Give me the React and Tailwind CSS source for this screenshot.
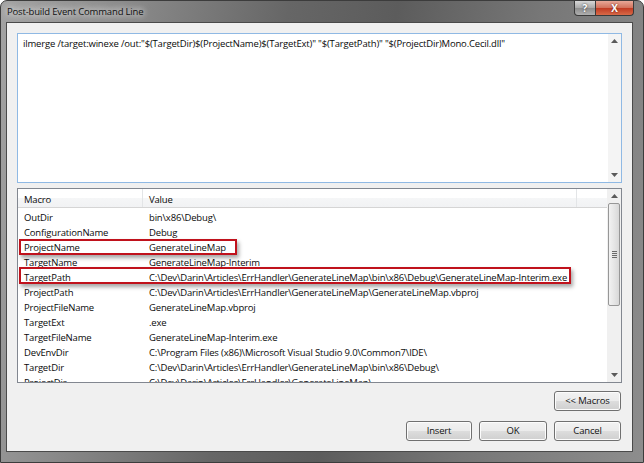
import React from 'react';

const rows = [
  ['OutDir', 'bin\\x86\\Debug\\'],
  ['ConfigurationName', 'Debug'],
  ['ProjectName', 'GenerateLineMap'],
  ['TargetName', 'GenerateLineMap-Interim'],
  ['TargetPath', 'C:\\Dev\\Darin\\Articles\\ErrHandler\\GenerateLineMap\\bin\\x86\\Debug\\GenerateLineMap-Interim.exe'],
  ['ProjectPath', 'C:\\Dev\\Darin\\Articles\\ErrHandler\\GenerateLineMap\\GenerateLineMap.vbproj'],
  ['ProjectFileName', 'GenerateLineMap.vbproj'],
  ['TargetExt', '.exe'],
  ['TargetFileName', 'GenerateLineMap-Interim.exe'],
  ['DevEnvDir', 'C:\\Program Files (x86)\\Microsoft Visual Studio 9.0\\Common7\\IDE\\'],
  ['TargetDir', 'C:\\Dev\\Darin\\Articles\\ErrHandler\\GenerateLineMap\\bin\\x86\\Debug\\'],
  ['ProjectDir', 'C:\\Dev\\Darin\\Articles\\ErrHandler\\GenerateLineMap\\'],
];

function Arrow({ up }) {
  return (
    <svg width="7" height="4" viewBox="0 0 7 4">
      {up ? <path d="M0 4 L3.5 0 L7 4 Z" fill="#5a5a5a" /> : <path d="M0 0 L3.5 4 L7 0 Z" fill="#5a5a5a" />}
    </svg>
  );
}

function Button({ children, w }) {
  return (
    <button className={`${w} h-[20px] rounded-[3px] border border-[#707070] bg-[linear-gradient(#f2f2f2_0%,#ebebeb_50%,#dddddd_51%,#cfcfcf_100%)] shadow-[inset_0_0_0_1px_#fcfcfc] text-[9.5px] tracking-[-0.17px] text-[#111] flex items-center justify-center`}>
      {children}
    </button>
  );
}

export default function App() {
  return (
    <div className="w-[644px] h-[463px] flex flex-col overflow-hidden rounded-t-[7px] border border-[#3c3c3c] bg-[linear-gradient(100deg,#a3a3a3_0%,#8a8a8a_18%,#666666_40%,#5c5c5c_55%,#777777_75%,#8d8d8d_100%)] font-['Open_Sans',sans-serif]">
      {/* Title bar */}
      <div className="h-[21px] flex items-start">
        <div className="pl-[6px] pt-[4px] text-[9.5px] tracking-[-0.17px] text-[#111] [text-shadow:0_0_6px_#ffffff,0_0_10px_rgba(255,255,255,0.8)]">
          Post-build Event Command Line
        </div>
        <div className="ml-auto mr-[9px] flex">
          <div className="w-[22px] h-[15px] rounded-bl-[4px] border border-t-0 border-[#3a3a3a] bg-[linear-gradient(#d8d8d8,#a8a8a8_50%,#8c8c8c_51%,#b0b0b0)] flex items-center justify-center text-[10px] font-bold text-white [text-shadow:0_0_2px_#222]">
            ?
          </div>
          <div className="w-[38px] h-[15px] rounded-br-[4px] border border-t-0 border-l-0 border-[#3a3a3a] bg-[linear-gradient(#e8a898,#d0705a_50%,#c03a22_51%,#d86a48)] flex items-center justify-center text-[10px] font-bold text-white [text-shadow:0_0_2px_#5a1a10]">
            X
          </div>
        </div>
      </div>

      {/* Body with frame */}
      <div className="flex-1 flex pl-[5px] pr-[10px] pb-[10px]">
        <div className="flex-1 flex flex-col border border-[#4a4a4a] bg-[#f0f0f0] px-[10px] pt-[10px] text-[9.5px] tracking-[-0.17px] text-[#0a0a0a]">
          {/* Command text box */}
          <div className="h-[150px] flex border border-[#8fb9e4] bg-white">
            <div className="flex-1 pl-[5px] pt-[3px] whitespace-nowrap">
              ilmerge /target:winexe /out:"$(TargetDir)$(ProjectName)$(TargetExt)" "$(TargetPath)" "$(ProjectDir)Mono.Cecil.dll"
            </div>
            <div className="w-[13px] bg-[#f4f4f4] flex flex-col items-center justify-between py-[5px]">
              <Arrow up />
              <Arrow />
            </div>
          </div>

          {/* Macro list */}
          <div className="relative mt-[5px] h-[195px] flex border border-[#828790] bg-white overflow-hidden">
            <div className="flex-1 flex flex-col min-w-0">
              <div className="h-[19px] flex items-center border-b border-[#d5d5d5] bg-[linear-gradient(#ffffff,#ffffff_50%,#f5f6f7_51%,#f1f2f4)]">
                <div className="w-[125px] h-full flex items-center pl-[6px] pt-[4px] border-r border-[#e3e5e7]">Macro</div>
                <div className="w-[434px] h-full flex items-center pl-[6px] pt-[4px] border-r border-[#e3e5e7]">Value</div>
              </div>
              <div className="pt-[3px]">
                {rows.map(([k, v]) => (
                  <div key={k} className="h-[15px] flex items-center whitespace-nowrap">
                    <div className="w-[125px] pl-[6px]">{k}</div>
                    <div className="pl-[6px]">{v}</div>
                  </div>
                ))}
              </div>
            </div>
            <div className="w-[14px] bg-[#f0f0f0] flex flex-col items-center">
              <div className="h-[14px] flex items-center justify-center"><Arrow up /></div>
              <div className="w-[12px] h-[103px] rounded-[2px] border border-[#979797] bg-[linear-gradient(90deg,#f2f2f2,#e6e6e6_50%,#d8d8d8)] flex flex-col items-center justify-center gap-[1px]">
                <div className="w-[5px] h-px bg-[#6a6a6a]" />
                <div className="w-[5px] h-px bg-[#6a6a6a]" />
                <div className="w-[5px] h-px bg-[#6a6a6a]" />
                <div className="w-[5px] h-px bg-[#6a6a6a]" />
              </div>
              <div className="flex-1" />
              <div className="h-[14px] flex items-center justify-center"><Arrow /></div>
            </div>

            {/* Annotation boxes */}
            <div className="absolute left-[1px] top-[50px] w-[218px] h-[16px] border-2 border-[#c0121c] shadow-[2px_3px_4px_rgba(0,0,0,0.35)]" />
            <div className="absolute left-[1px] top-[78px] w-[552px] h-[17px] border-2 border-[#c0121c] shadow-[2px_3px_4px_rgba(0,0,0,0.35)]" />
          </div>

          <div className="mt-[8px] flex justify-end pr-[1px]">
            <Button w="w-[67px]">&lt;&lt; Macros</Button>
          </div>
          <div className="mt-[10px] flex justify-end gap-[7px] pr-[1px]">
            <Button w="w-[66px]">Insert</Button>
            <Button w="w-[68px]">OK</Button>
            <Button w="w-[67px]">Cancel</Button>
          </div>
        </div>
      </div>
    </div>
  );
}
